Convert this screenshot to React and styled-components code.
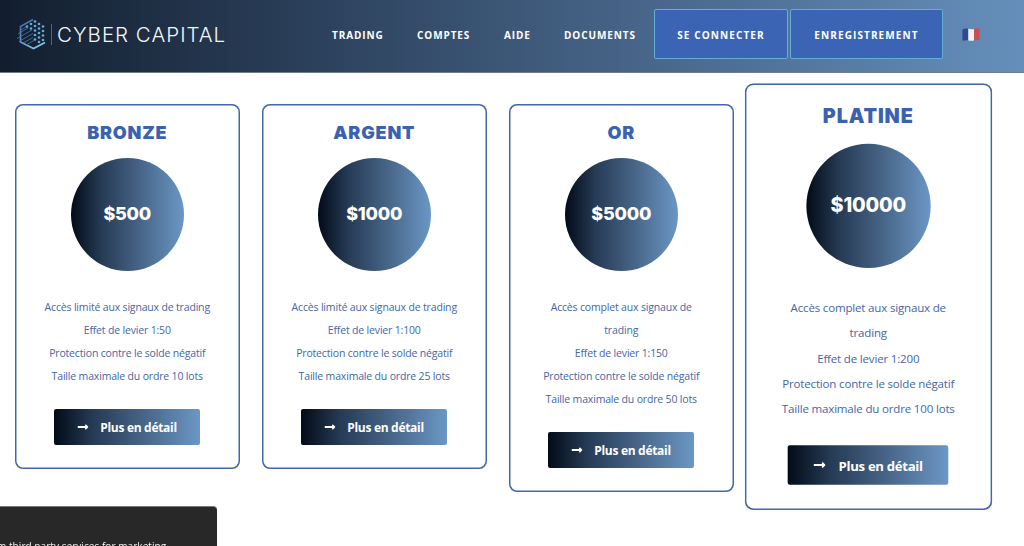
import React from "react";
import styled, { createGlobalStyle } from "styled-components";
import { FaLongArrowAltRight } from "react-icons/fa";

const navLinks = [
  { label: "TRADING", width: 85 },
  { label: "COMPTES", width: 87 },
  { label: "AIDE", width: 60 },
  { label: "DOCUMENTS", width: 90 },
];

const plans = [
  {
    name: "BRONZE",
    price: "$500",
    features: [
      "Accès limité aux signaux de trading",
      "Effet de levier 1:50",
      "Protection contre le solde négatif",
      "Taille maximale du ordre 10 lots",
    ],
  },
  {
    name: "ARGENT",
    price: "$1000",
    features: [
      "Accès limité aux signaux de trading",
      "Effet de levier 1:100",
      "Protection contre le solde négatif",
      "Taille maximale du ordre 25 lots",
    ],
  },
  {
    name: "OR",
    price: "$5000",
    features: [
      "Accès complet aux signaux de trading",
      "Effet de levier 1:150",
      "Protection contre le solde négatif",
      "Taille maximale du ordre 50 lots",
    ],
  },
  {
    name: "PLATINE",
    price: "$10000",
    featured: true,
    features: [
      "Accès complet aux signaux de trading",
      "Effet de levier 1:200",
      "Protection contre le solde négatif",
      "Taille maximale du ordre 100 lots",
    ],
  },
];

// dots on the right half of the hexagon: [x, y]
const dots = [
  [19, 4.5], [15, 7], [19, 9], [23, 7], [27, 9.5],
  [11, 9.5], [15, 11.5], [23, 11.5], [27, 14], [19, 13.5],
  [23, 16], [27, 18.5], [19, 18], [23, 20.5], [27, 23],
  [19, 22.5], [23, 25],
];

function LogoMark() {
  return (
    <svg width="32" height="34" viewBox="0 0 32 34" fill="none">
      <defs>
        <linearGradient id="mark" x1="0" y1="0" x2="0.7" y2="1">
          <stop offset="0" stopColor="#3d5ea6" />
          <stop offset="1" stopColor="#7fcbe6" />
        </linearGradient>
      </defs>
      <path
        d="M17 2.5 4.5 9.5v15.500L17.500 31.500 29 25.500"
        stroke="url(#mark)"
        strokeWidth="1.7"
      />
      <path
        d="M2 17 12 11M1 21.500 16 13M3 24.500 17 16.500M7 26 17 20.500M10 28 18 23.500M5 13 10 10"
        stroke="#477cb4"
        strokeWidth="0.8"
      />
      {dots.map(([x, y]) => (
        <circle key={`${x}-${y}`} cx={x} cy={y} r="1.35" fill="#69a9d3" />
      ))}
    </svg>
  );
}

function FrenchFlag() {
  return (
    <svg width="18" height="13" viewBox="0 0 18 13">
      <path d="M2 .8C3.500.3 5 .3 6.300.7v11.800C4.500 12 3 12.200 1.500 12.700.7 12.900.4 12.500.4 12V2.500C.4 1.600 1 1.100 2 .8Z" fill="#2f4a93" />
      <path d="M6.300.7c2 .5 3.700.7 5.700.2v11.600c-2 .4-3.700.3-5.700 0Z" fill="#f1f3f6" />
      <path d="M12 .9c1.500-.4 3-.7 4.700-.5.6.1.9.5.9 1v9.800c0 .6-.3.9-.9.9-1.700 0-3.200.1-4.700.4Z" fill="#cf4c50" />
    </svg>
  );
}

function PlanCard({ name, price, features, featured }) {
  return (
    <Card $featured={featured}>
      <PlanName>{name}</PlanName>
      <Price>{price}</Price>
      <Features>
        {features.map((feature) => (
          <li key={feature}>{feature}</li>
        ))}
      </Features>
      <DetailButton>
        <FaLongArrowAltRight size={12} />
        <span>Plus en détail</span>
      </DetailButton>
    </Card>
  );
}

export default function App() {
  return (
    <>
      <GlobalStyle />
      <Page>
        <Header>
          <Logo>
            <LogoMark />
            <LogoText>CYBER CAPITAL</LogoText>
          </Logo>
          <Nav>
            {navLinks.map(({ label, width }) => (
              <NavLink key={label} $width={width}>
                {label}
              </NavLink>
            ))}
          </Nav>
          <Actions>
            <AuthButton $width={134}>SE CONNECTER</AuthButton>
            <AuthButton $width={153}>ENREGISTREMENT</AuthButton>
          </Actions>
          <FrenchFlag />
        </Header>
        <Plans>
          {plans.map((plan) => (
            <PlanCard key={plan.name} {...plan} />
          ))}
        </Plans>
        <CookieNotice>m third party services for marketing</CookieNotice>
      </Page>
    </>
  );
}

const GlobalStyle = createGlobalStyle`
  * {
    box-sizing: border-box;
  }

  body {
    margin: 0;
    background: #fff;
    font-family: "Open Sans", sans-serif;
  }
`;

const Page = styled.div`
  height: 546px;
  overflow: hidden;
`;

const Header = styled.header`
  display: flex;
  align-items: center;
  height: 73px;
  padding: 0 0 4px 16px;
  border-bottom: 1px solid #6d7c8c;
  background: linear-gradient(90deg, #121e2e 0%, #2c415c 31%, #48668a 63%, #658fba 100%);
`;

const Logo = styled.div`
  display: flex;
  align-items: center;
  width: 316px;
`;

const LogoText = styled.div`
  margin-left: 3px;
  padding: 0 0 0 5px;
  border-left: 1px solid #53677c;
  color: #f3f8fc;
  font-family: "Inter", sans-serif;
  font-size: 20.5px;
  font-weight: 300;
  letter-spacing: 1px;
  line-height: 21px;
  white-space: nowrap;
`;

const Nav = styled.nav`
  display: flex;
  padding-top: 1px;
`;

const NavLink = styled.a`
  width: ${({ $width }) => $width}px;
  color: #fff;
  font-size: 10px;
  font-weight: 700;
  letter-spacing: 0.9px;
`;

const Actions = styled.div`
  display: flex;
  gap: 2px;
  margin-right: 19px;
`;

const AuthButton = styled.button`
  width: ${({ $width }) => $width}px;
  height: 50px;
  padding: 2px 0 0;
  border: 1px solid #66add6;
  border-radius: 2px;
  background: #3b64b4;
  color: #fff;
  font-family: inherit;
  font-size: 10px;
  font-weight: 700;
  letter-spacing: 1.1px;
`;

const Plans = styled.main`
  display: flex;
  align-items: flex-start;
  gap: 22.5px;
  padding: 30.5px 0 0 15px;
`;

const Card = styled.section`
  display: flex;
  flex-direction: column;
  align-items: center;
  flex: none;
  width: 224.5px;
  padding: 16.5px 27px 23.5px;
  border-radius: 8px;
  background: #fff;
  box-shadow: inset 0 0 0 1.5px #4466ab;
  transform: ${({ $featured }) => ($featured ? "translateY(-1.3px) scale(1.1)" : "none")};
`;

const PlanName = styled.h2`
  margin: 0;
  color: #3b62b1;
  font-family: "Inter", sans-serif;
  font-size: 18px;
  font-weight: 900;
  letter-spacing: 0.8px;
  line-height: 25px;
`;

const Price = styled.div`
  width: 113px;
  height: 113px;
  margin-top: 13px;
  border-radius: 50%;
  background: linear-gradient(90deg, #020b18 0%, #263b55 27%, #466385 60%, #6b97c5 100%);
  color: #fff;
  font-family: "Inter", sans-serif;
  font-size: 18px;
  font-weight: 800;
  letter-spacing: -0.2px;
  line-height: 112px;
  text-align: center;
`;

const Features = styled.ul`
  margin: 25px 0 0;
  padding: 0;
  color: #4566a5;
  font-size: 10.5px;
  letter-spacing: -0.17px;
  line-height: 23px;
  list-style: none;
  text-align: center;
`;

const DetailButton = styled.button`
  display: flex;
  align-items: center;
  gap: 11px;
  width: 146px;
  height: 36px;
  margin-top: 21px;
  padding: 0 0 0 23px;
  border: 0;
  border-radius: 2px;
  background: linear-gradient(90deg, #020b18 0%, #263b55 27%, #466385 60%, #6b97c5 100%);
  color: #fff;
  font-family: inherit;
  font-size: 12px;
  font-weight: 700;
  letter-spacing: -0.3px;

  span {
    padding-top: 1px;
  }
`;

const CookieNotice = styled.aside`
  position: fixed;
  top: 506px;
  left: 0;
  width: 217px;
  height: 60px;
  padding-top: 32px;
  border-top: 1px solid #777;
  border-radius: 0 4px 0 0;
  background: #282828;
  color: #f0f0f0;
  font-size: 10px;
  letter-spacing: 0.06px;
  line-height: 14px;
  text-indent: -3px;
  white-space: nowrap;
`;
